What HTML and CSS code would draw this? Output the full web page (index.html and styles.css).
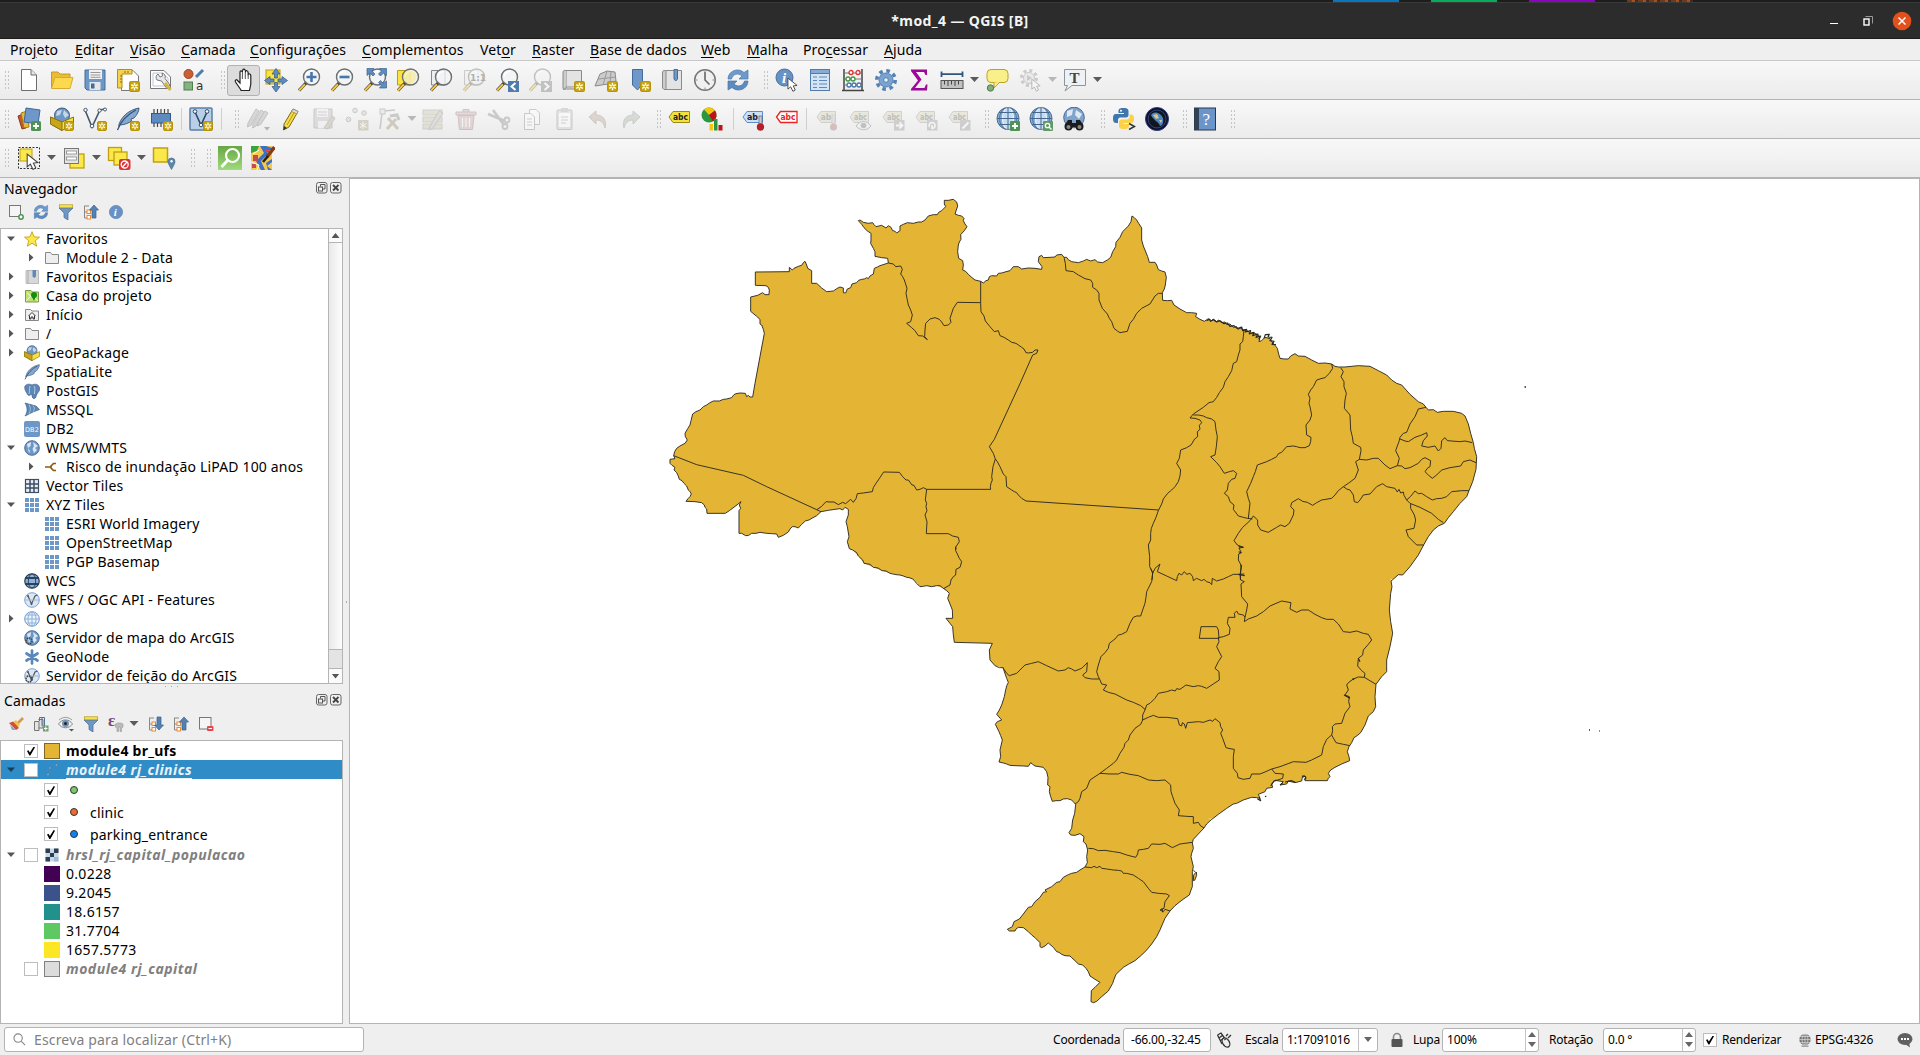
FILE: index.html
```html
<!DOCTYPE html>
<html lang="pt-BR">
<head>
<meta charset="utf-8">
<title>*mod_4 — QGIS [B]</title>
<link rel="stylesheet" href="styles.css">
</head>
<body>
<svg class="defs" width="0" height="0">
<defs>
<linearGradient id="gBlue" x1="0" y1="0" x2="0" y2="1"><stop offset="0" stop-color="#7fa6d3"/><stop offset="1" stop-color="#4a77ad"/></linearGradient>
<linearGradient id="gGreen" x1="0" y1="0" x2="0" y2="1"><stop offset="0" stop-color="#68a545"/><stop offset="1" stop-color="#9fdb7c"/></linearGradient>
<symbol id="new" viewBox="0 0 10 10"><rect x=".5" y=".5" width="9" height="9" rx="1.5" fill="#c8a50c" stroke="#b5940a"/><path d="M5 1.6V8.400M2 3.300L8 6.700M8 3.300L2 6.700" stroke="#fff" stroke-width="1.300"/><circle cx="5" cy="5" r="1" fill="#c8a50c"/></symbol>
<symbol id="lens" viewBox="0 0 24 24"><path d="M2 22.500L10 14" stroke="#333" stroke-width="3.200"/><path d="M2 22.500L8 16.200" stroke="#f3c63f" stroke-width="2"/><circle cx="14.500" cy="9" r="8" fill="#f2f4f5" fill-opacity=".75" stroke="#6b6f70" stroke-width="1.400"/><path d="M9 9a5.500 5.500 0 0 1 6-5.500" stroke="#fff" stroke-width="1.500" fill="none"/></symbol>
<symbol id="page" viewBox="0 0 24 24"><path d="M4.500 1.500H14L19.500 7V22.500H4.500Z" fill="#fff" stroke="#6e6e6e"/><path d="M14 1.500V7H19.500" fill="#e4e4e4" stroke="#6e6e6e"/></symbol>
<symbol id="open" viewBox="0 0 24 24"><path d="M1.500 20V4H8L10 6H20V10" fill="#e9bd35" stroke="#c7982a"/><path d="M1.500 20.500L5 9.500H23L20 20.500Z" fill="#fcd94f" stroke="#d8ab33"/></symbol>
<symbol id="save" viewBox="0 0 24 24"><path d="M2 2H22V22H4L2 20Z" fill="#6d97c7" stroke="#446c99"/><rect x="6" y="2" width="13" height="9" fill="#f1f1f1"/><path d="M7.500 4.500H17.500M7.500 7H17.500M7.500 9.300H17.500" stroke="#999"/><rect x="6.500" y="14" width="11" height="8" fill="#e4e6e8"/><rect x="8" y="15.500" width="3.500" height="5" fill="#446c99"/></symbol>
<symbol id="layoutnew" viewBox="0 0 24 24"><path d="M5.500 2.500H17L22.500 8V22.500H5.500Z" fill="#fff" stroke="#777"/><path d="M1.500 1.500H16V6H6V20H1.500Z" fill="#f2d24f" stroke="#b58e14"/><path d="M4 8H6M4 11H6M4 14H6M9 3V5M12 3V5" stroke="#8c6c0d"/><use href="#new" x="13" y="13" width="11" height="11"/></symbol>
<symbol id="layouts" viewBox="0 0 24 24"><path d="M1.500 2.500H15L21.500 9V20.500H1.500Z" fill="#fff" stroke="#777"/><path d="M4 5H13L19 10V18H4Z" fill="none" stroke="#b7c6d9"/><path d="M8 12A4 4 0 0 1 9 6L11 9L13.500 8L13 5A4 4 0 0 1 16 10.500L21 17L17.500 20L12.500 13Z" fill="#e8e8e8" stroke="#777"/><path d="M16 15L21.500 22" stroke="#d8b53b" stroke-width="3"/></symbol>
<symbol id="style" viewBox="0 0 24 24"><circle cx="6.500" cy="6" r="4.500" fill="#c85f36" stroke="#a2401b"/><path d="M14 9L21 2" stroke="#4f7cae" stroke-width="3"/><rect x="2" y="14" width="8.500" height="8" fill="#86b283" stroke="#4f8150"/><text x="14" y="22" font-size="12" font-family="DejaVu Sans" fill="#333">a</text></symbol>
<symbol id="hand" viewBox="0 0 24 24"><path d="M9 22L3.500 14C2.500 12 4.500 11 5.500 12.500L8 15V4C8 2.500 10 2.500 10.200 4L10.700 2.200C11 .8 13 .8 13.200 2.500L13.500 3.500C14 2.300 16 2.500 16 4.200L16.300 6.500C17 5.400 18.800 5.800 18.800 7.500V16L17.500 22.500H9Z" fill="#fff" stroke="#222" stroke-width="1.200"/><path d="M10.400 4V11M13.300 4V11M16.200 6V11" stroke="#555"/></symbol>
<symbol id="pan" viewBox="0 0 24 24"><rect x="2" y="2" width="14" height="14" fill="#fae23f" stroke="#bd9c10"/><g fill="#5d8cc0" stroke="#3b6391" stroke-width=".8"><path d="M12 .5L16 6H13.500V10H10.500V6H8Z"/><path d="M12 24L16 18.500H13.500V14.500H10.500V18.500H8Z"/><path d="M.5 12.500L6 8.500V11H10V14H6V16.500Z"/><path d="M23.500 12.500L18 8.500V11H14V14H18V16.500Z"/></g></symbol>
<symbol id="zin" viewBox="0 0 24 24"><use href="#lens" width="24" height="24"/><path d="M14.500 4V14M9.500 9H19.500" stroke="#4777aa" stroke-width="2.600"/></symbol>
<symbol id="zout" viewBox="0 0 24 24"><use href="#lens" width="24" height="24"/><path d="M9.500 9H19.500" stroke="#4777aa" stroke-width="2.600"/></symbol>
<symbol id="zfull" viewBox="0 0 24 24"><use href="#lens" width="24" height="24"/><g fill="#5f8dc1" stroke="#3b6391" stroke-width=".7"><path d="M4 .5H11L9 3L12 6L10 8L7 5L4 7.500Z"/><path d="M23.500 .5H16.500L18.500 3L15.500 6L17.500 8L20.500 5L23.500 7.500Z"/><path d="M23.500 20H16.500L18.500 17.500L15.500 14.500L17.500 12.500L20.500 15.500L23.500 13Z"/></g></symbol>
<symbol id="zsel" viewBox="0 0 24 24"><path d="M1.500 2.500H14V17H1.500Z" fill="#fbe33d" stroke="#bd9c10"/><use href="#lens" width="24" height="24"/><circle cx="14" cy="9" r="6.500" fill="#f5e98a" opacity=".6"/></symbol>
<symbol id="zlay" viewBox="0 0 24 24"><path d="M2.500 2.500H16V17H2.500Z" fill="#eee" stroke="#888"/><use href="#lens" width="24" height="24"/></symbol>
<symbol id="znat" viewBox="0 0 24 24"><use href="#zlay" width="24" height="24"/><text x="8" y="12.500" font-size="9" font-weight="bold" font-family="DejaVu Sans" fill="#444">1:1</text></symbol>
<symbol id="zlast" viewBox="0 0 24 24"><use href="#lens" width="24" height="24"/><rect x="13" y="13" width="11" height="11" fill="#4f7cad"/><path d="M20.500 15L16.500 18.500L20.500 22" fill="none" stroke="#fff" stroke-width="2"/></symbol>
<symbol id="znext" viewBox="0 0 24 24"><use href="#lens" width="24" height="24"/><rect x="13" y="13" width="11" height="11" fill="#777"/><path d="M16.500 15L20.500 18.500L16.500 22" fill="none" stroke="#fff" stroke-width="2"/></symbol>
<symbol id="view" viewBox="0 0 24 24"><path d="M5 2.500H20.500V19H5Z" fill="#e3e3e3" stroke="#8a8a8a"/><path d="M5 2.500C2.500 2 2 3 2 5V20C2 22 5 22 5 19" fill="#ccc" stroke="#8a8a8a"/><path d="M2 21H18V19" fill="#ddd" stroke="#8a8a8a"/><use href="#new" x="13" y="13" width="11" height="11"/></symbol>
<symbol id="view3d" viewBox="0 0 24 24"><path d="M6 6L13 3L21 4L22 13L14 16L1 18Z" fill="#ccc" stroke="#8a8a8a"/><path d="M4 11L22 9M13 3L9 17M17 4L16 16" stroke="#999" fill="none"/><use href="#new" x="13" y="13" width="11" height="11"/></symbol>
<symbol id="bmnew" viewBox="0 0 24 24"><path d="M5.500 1.500H15.500V16L10.500 22L5.500 17Z" fill="#6e98c9" stroke="#446b99"/><use href="#new" x="13" y="13" width="11" height="11"/></symbol>
<symbol id="bm" viewBox="0 0 24 24"><path d="M5.500 2.500H21.500V21.500H5.500Z" fill="#e3e3e3" stroke="#8a8a8a"/><path d="M5.500 2.500H3.500L2.500 4V20L4 21.500H6V3" fill="#ccc" stroke="#8a8a8a"/><path d="M14 1.500H17.500V11L15.700 13L14 11Z" fill="#6e98c9" stroke="#446b99"/></symbol>
<symbol id="clock" viewBox="0 0 24 24"><circle cx="12" cy="12" r="10.300" fill="#f0f0f0" stroke="#777" stroke-width="1.500"/><path d="M12 4V12L16.500 16.500" fill="none" stroke="#666" stroke-width="1.600"/><path d="M12 2.500V4.500M12 19.500V21.500M2.500 12H4.500M19.500 12H21.500" stroke="#888"/></symbol>
<symbol id="refresh" viewBox="0 0 24 24"><path d="M2 11C2 3 12 -1 18 4.500L22 2V11H13L16 8C12 4.500 7 6 5.500 11Z" fill="#6e9acb" stroke="#4a77aa" stroke-width=".7"/><path d="M22 13C22 21 12 25 6 19.500L2 22V13H11L8 16C12 19.500 17 18 18.500 13Z" fill="#5d8bbf" stroke="#4a77aa" stroke-width=".7"/></symbol>
<symbol id="cursor" viewBox="0 0 12 16"><path d="M1 1V13L4 10.500L6.500 15.500L9 14L6.800 9.500L11 9Z" fill="#fff" stroke="#444"/></symbol>
<symbol id="info" viewBox="0 0 24 24"><circle cx="9.500" cy="9.500" r="8.500" fill="#6792c6" stroke="#486f9e"/><text x="7" y="15" font-size="15" font-style="italic" font-weight="bold" font-family="Liberation Serif" fill="#fff">i</text><use href="#cursor" x="12" y="9" width="11" height="15"/></symbol>
<symbol id="table" viewBox="0 0 24 24"><rect x="2.500" y="1.500" width="19" height="21" fill="#d5e4f4" stroke="#4f7cad"/><rect x="2.500" y="1.500" width="19" height="4" fill="#86acd6" stroke="#4f7cad"/><path d="M5 9H9M5 12.500H9M5 16H9M5 19.500H9M11 9H19M11 12.500H19M11 16H19M11 19.500H19" stroke="#5d89ba" stroke-width="1.200"/></symbol>
<symbol id="abacus" viewBox="0 0 24 24"><path d="M3 1V23M21 1V23M1 22.500H23" stroke="#444" stroke-width="1.500"/><path d="M3 5H21M3 11H21M3 17H21" stroke="#777"/><g stroke-width="1.300" fill="#fff"><circle cx="10" cy="4.500" r="2" stroke="#d33"/><circle cx="17" cy="4.500" r="2" stroke="#d33"/><circle cx="7" cy="11" r="2" stroke="#3a9a3a"/><circle cx="12" cy="11" r="2" stroke="#3a9a3a"/><circle cx="8" cy="17" r="2" stroke="#47a"/><circle cx="13" cy="17" r="2" stroke="#47a"/><circle cx="18" cy="17" r="2" stroke="#47a"/></g></symbol>
<symbol id="gear" viewBox="0 0 24 24"><circle cx="12" cy="12" r="9.200" fill="none" stroke="#5582b5" stroke-width="3.600" stroke-dasharray="3.600 3.625"/><circle cx="12" cy="12" r="7" fill="#7aa3d2" stroke="#5582b5"/><circle cx="12" cy="12" r="2.300" fill="#e9eff6" stroke="#5582b5"/></symbol>
<symbol id="sigma" viewBox="0 0 24 24"><path d="M4 1.500H20V7H18.500L17 4H9L14.500 11.500L8 20H17.500L19 16.500H20.500L20 22.500H4V21L11 12.500L4 3Z" fill="#a0069a"/></symbol>
<symbol id="ruler" viewBox="0 0 24 24"><path d="M1.500 3.500V9M22.500 3.500V9M1.500 6.200H22.500" stroke="#31547c" stroke-width="1.800"/><rect x="1" y="12.500" width="22" height="8" fill="#c2c2c2" stroke="#555"/><path d="M4.500 13V16.500M8 13V18M11.500 13V16.500M15 13V18M18.500 13V16.500" stroke="#444"/></symbol>
<symbol id="tips" viewBox="0 0 24 24"><rect x="2" y="1.500" width="21" height="13" rx="4" fill="#faf08a" stroke="#c0a020"/><path d="M9 14.500V20L15 14" fill="#faf08a" stroke="#c0a020"/><circle cx="5.500" cy="20" r="3.200" fill="#7fae7b" stroke="#4c804c"/></symbol>
<symbol id="action" viewBox="0 0 24 24"><circle cx="11" cy="10" r="7.500" fill="none" stroke="#888" stroke-width="3" stroke-dasharray="3 2.900"/><circle cx="11" cy="10" r="5.500" fill="#ddd" stroke="#888"/><path d="M9 7V13L14 10Z" fill="#888"/><use href="#cursor" x="13" y="10" width="10" height="14"/></symbol>
<symbol id="textann" viewBox="0 0 24 24"><path d="M1.500 1.500H22.500V17.500H9L2 23L4.500 17.500H1.500Z" fill="#eef2f5" stroke="#8a959d"/><text x="6.500" y="15" font-size="15" font-weight="bold" font-family="Liberation Serif" fill="#444">T</text></symbol>

<symbol id="dsm" viewBox="0 0 24 24"><path d="M1 9L6 7L9 21L5 22Z" fill="#c8562d" stroke="#8f3815"/><path d="M4 6L10 4L12 20L7 21Z" fill="#e8b93a" stroke="#a37c14"/><path d="M9 1L23 3L21 17L7 15Z" fill="#6e98c9" stroke="#3f6795"/><rect x="14" y="14" width="10" height="10" rx="1.500" fill="#4f9256"/><path d="M19 16V22M16 19H22" stroke="#fff" stroke-width="1.800"/></symbol>
<symbol id="gpkg" viewBox="0 0 24 24"><circle cx="12" cy="8.500" r="7.500" fill="#6e96c4" stroke="#38597f"/><path d="M7 4L12 3L10 8L6 9ZM14 3L19 8L15 11L13 7Z" fill="#c5d6e8"/><path d="M.5 10L12 15L23.500 10V17L12 23.500L.5 17Z" fill="#f6df45" stroke="#8a7210"/><path d="M.5 10L12 15V23.500L.5 17Z" fill="#c9a51a" stroke="#8a7210"/></symbol>
<symbol id="gpkgnew" viewBox="0 0 24 24"><use href="#gpkg" width="24" height="24"/><use href="#new" x="14" y="14" width="10" height="10"/></symbol>
<symbol id="shp" viewBox="0 0 24 24"><path d="M2 3L9 20L17 3L22 2" fill="none" stroke="#45586b" stroke-width="1.600"/><g fill="#fff" stroke="#45586b"><circle cx="2.500" cy="3" r="1.700"/><circle cx="9" cy="19" r="1.800"/><circle cx="16.500" cy="3.500" r="1.700"/><circle cx="22" cy="2.500" r="1.500"/></g><use href="#new" x="14" y="14" width="10" height="10"/></symbol>
<symbol id="feather" viewBox="0 0 24 24"><path d="M2.500 19.500C4 11 12 3 23 1C23 4 21 8 18 11L15 12L15.500 14C13 16 9 17.500 4.500 18" fill="#86a8cf" stroke="#3a5d85"/><path d="M1.500 23C5 14 12 7 20 3" fill="none" stroke="#2f5077" stroke-width="1.300"/></symbol>
<symbol id="splnew" viewBox="0 0 24 24"><use href="#feather" width="24" height="24"/><use href="#new" x="14" y="14" width="10" height="10"/></symbol>
<symbol id="mem" viewBox="0 0 24 24"><path d="M5 2V20M8.500 2V20M12 2V20M15.500 2V20M19 2V20" stroke="#444" stroke-width="1.200"/><rect x="2.500" y="6.500" width="19" height="9.500" fill="#5d8bc0" stroke="#345a86"/><use href="#new" x="14" y="14" width="10" height="10"/></symbol>
<symbol id="virt" viewBox="0 0 24 24"><rect x="1" y="1" width="22" height="22" rx="1" fill="#b9cfe8" stroke="#5b7fa8" stroke-width="1.500"/><path d="M6 5L12 18L18 5" fill="none" stroke="#2d4863" stroke-width="1.600"/><g fill="#fff" stroke="#2d4863"><circle cx="6" cy="4.500" r="1.800"/><circle cx="12" cy="18" r="1.800"/><circle cx="18" cy="4.500" r="1.800"/></g><use href="#new" x="14" y="14" width="10" height="10"/></symbol>
<symbol id="pencils" viewBox="0 0 24 24"><g fill="#aaa" stroke="#777"><path d="M2 16L10 2L13 4L5 18L1.500 20Z"/><path d="M7 17L15 3L18 5L10 19L6.500 21Z"/><path d="M12 15L19 4L22 6L15 17L11.500 19Z"/></g><path d="M18 20H24L21 23.500Z" fill="#555"/></symbol>
<symbol id="pencil" viewBox="0 0 24 24"><path d="M5 17L14 2L19 4.500L10 20L4.500 23Z" fill="#f5dc45" stroke="#7b6a19"/><path d="M14 2L19 4.500L18 7L12.500 4.500Z" fill="#ddd" stroke="#888" stroke-width=".7"/><path d="M4.500 23L5 19L8 21Z" fill="#333"/><path d="M8 18L15.500 5" stroke="#b8991f"/></symbol>
<symbol id="saveed" viewBox="0 0 24 24"><path d="M2 2H20V21H2Z" fill="#bbb" stroke="#888"/><rect x="5" y="2" width="11" height="8" fill="#eee"/><path d="M6 5H15M6 8H15" stroke="#999"/><rect x="6" y="14" width="9" height="7" fill="#eee"/><path d="M12 21L20 9L23 11L16 22Z" fill="#b5a98c" stroke="#888"/></symbol>
<symbol id="addpt" viewBox="0 0 24 24"><g fill="#ccc" stroke="#888"><circle cx="10" cy="3.500" r="2.300"/><circle cx="19" cy="6" r="2.300"/><circle cx="3.500" cy="12.500" r="2.300"/></g><rect x="13" y="13" width="10.500" height="10.500" rx="1" fill="#a89f80"/><path d="M18 14.500V22M15 16.500L21.500 20.500M21.500 16.500L15 20.500" stroke="#fff"/></symbol>
<symbol id="vertex" viewBox="0 0 24 24"><path d="M4 6L2 22M6 4L17 3" stroke="#888" stroke-width="1.500"/><rect x="2" y="2" width="5" height="5" fill="#ddd" stroke="#888"/><path d="M9 22L18 12M10 11L20 22" stroke="#9a8f70" stroke-width="3"/><path d="M12 9L19 8L21 13" stroke="#888" stroke-width="3" fill="none"/></symbol>
<symbol id="attr" viewBox="0 0 24 24"><g fill="#c9c6a0" stroke="#999"><rect x="2" y="3" width="19" height="5"/><rect x="2" y="10" width="19" height="5"/><rect x="2" y="17" width="19" height="5"/></g><path d="M8 21L18 4L22 6L12 21L8 23Z" fill="#bbb" stroke="#888"/></symbol>
<symbol id="trash" viewBox="0 0 24 24"><path d="M4 8.500H20L18.500 22.500H5.500Z" fill="#c8a8a8" stroke="#997878"/><path d="M2 5H22V8H2ZM9 5V2.500H15V5" fill="#ccb0b0" stroke="#997878"/><path d="M8.500 11V20M12 11V20M15.500 11V20" stroke="#fff"/></symbol>
<symbol id="cut" viewBox="0 0 24 24"><path d="M1 7L18 14M6 3L17 18" stroke="#888" stroke-width="2.600"/><circle cx="20" cy="13" r="2.500" fill="none" stroke="#888" stroke-width="1.800"/><circle cx="18" cy="19.500" r="2.500" fill="none" stroke="#888" stroke-width="1.800"/></symbol>
<symbol id="copy" viewBox="0 0 24 24"><path d="M9.500 2.500H16L19.500 6V17.500H9.500Z" fill="#fff" stroke="#888"/><path d="M4.500 6.500H11L14.500 10V22.500H4.500Z" fill="#fff" stroke="#888"/><path d="M7 12H12M7 15H12M7 18H12" stroke="#999"/></symbol>
<symbol id="paste" viewBox="0 0 24 24"><rect x="4" y="3" width="15" height="19.500" rx="1" fill="#ccc" stroke="#888"/><rect x="6" y="6" width="11" height="14" fill="#fff"/><rect x="8" y="1" width="7" height="4" fill="#aaa"/><path d="M8 10H15M8 13H15M8 16H13" stroke="#999"/></symbol>
<symbol id="undo" viewBox="0 0 24 24"><path d="M3 10L10 4V8C17 8 21 13 19 21C18 16 15 13 10 13V17Z" fill="#b9a695" stroke="#99887a"/></symbol>
<symbol id="redo" viewBox="0 0 24 24"><path d="M21 10L14 4V8C7 8 3 13 5 21C6 16 9 13 14 13V17Z" fill="#aab2a5" stroke="#8a9286"/></symbol>
<symbol id="lab" viewBox="0 0 24 24"><path d="M2 10L6 4.500H22.500V15.500H6Z" fill="#f2e03c" stroke="#9d8a12"/><text x="6" y="13.300" font-size="8.500" font-weight="bold" font-family="DejaVu Sans" textLength="15" lengthAdjust="spacingAndGlyphs" fill="#222">abc</text></symbol>
<symbol id="diag" viewBox="0 0 24 24"><circle cx="9" cy="8" r="7.500" fill="#2a9740"/><path d="M9 8L4 2.500A7.500 7.500 0 0 1 15 3.500Z" fill="#f6c50e"/><path d="M9 8L15 3.500A7.500 7.500 0 0 1 13 14.500Z" fill="#c01414"/><rect x="9.500" y="17" width="3.500" height="6.500" fill="#f6c50e"/><rect x="14" y="12" width="3.500" height="11.500" fill="#2a9740"/><rect x="18.500" y="18" width="4" height="5.500" fill="#c01414"/></symbol>
<symbol id="labpin" viewBox="0 0 24 24"><path d="M1 10L5 4.500H20.500V15.500H5Z" fill="#cfe0f5" stroke="#5b8bd0"/><text x="5" y="13.300" font-size="9" font-weight="bold" font-family="DejaVu Sans" textLength="11" lengthAdjust="spacingAndGlyphs" fill="#222">ab</text><rect x="17" y="9" width="3" height="8" fill="#ccc" stroke="#555" stroke-width=".6"/><circle cx="18.500" cy="20" r="3.700" fill="#b3202a"/></symbol>
<symbol id="labred" viewBox="0 0 24 24"><path d="M1.500 10L5.500 4.500H22V15.500H5.500Z" fill="#fff" stroke="#e22" stroke-width="1.300"/><text x="5.500" y="13.400" font-size="8.500" font-weight="bold" font-family="DejaVu Sans" textLength="15" lengthAdjust="spacingAndGlyphs" fill="#e22">abc</text></symbol>
<symbol id="labg" viewBox="0 0 24 24"><path d="M2 10L6 4.500H20.500V15.500H6Z" fill="#d8d6b8" stroke="#999"/><text x="6" y="13.300" font-size="8.500" font-weight="bold" font-family="DejaVu Sans" textLength="13" lengthAdjust="spacingAndGlyphs" fill="#666">abc</text></symbol>
<symbol id="lg1" viewBox="0 0 24 24"><path d="M2 10L6 4.500H20.500V15.500H6Z" fill="#d8d6b8" stroke="#999"/><text x="5.500" y="13.300" font-size="9" font-weight="bold" font-family="DejaVu Sans" textLength="11" lengthAdjust="spacingAndGlyphs" fill="#666">ab</text><rect x="17" y="8" width="3" height="9" fill="#ccc" stroke="#888" stroke-width=".6"/><circle cx="18.500" cy="20" r="3.500" fill="#b07070"/></symbol>
<symbol id="lg2" viewBox="0 0 24 24"><use href="#labg" width="24" height="24"/><path d="M8 19C12 13 19 13 23 19C19 24 12 24 8 19Z" fill="#eee" stroke="#777"/><circle cx="15.500" cy="18.500" r="2.800" fill="#777"/></symbol>
<symbol id="lg3" viewBox="0 0 24 24"><use href="#labg" width="24" height="24"/><rect x="13" y="13" width="10.500" height="10.500" fill="#999"/><path d="M15 18.500H21M18.500 15.500L21.500 18.500L18.500 21.500" stroke="#fff" stroke-width="1.800" fill="none"/></symbol>
<symbol id="lg4" viewBox="0 0 24 24"><use href="#labg" width="24" height="24"/><rect x="13" y="13" width="10.500" height="10.500" fill="#999"/><path d="M15.500 20A3 3 0 1 1 18 21.500V18" stroke="#fff" stroke-width="1.600" fill="none"/></symbol>
<symbol id="lg5" viewBox="0 0 24 24"><use href="#labg" width="24" height="24"/><rect x="13" y="13" width="10.500" height="10.500" fill="#999"/><path d="M15.500 21.500L21.500 15.500" stroke="#fff" stroke-width="2"/></symbol>
<symbol id="wglobe" viewBox="0 0 24 24"><circle cx="12" cy="11.500" r="11" fill="#86acd8" stroke="#4a6d96"/><ellipse cx="12" cy="11.500" rx="5.500" ry="11" fill="#c9dcf1" stroke="#fff"/><path d="M12 .5V22.500M1 11.500H23M3 5.500H21M3 17.500H21" stroke="#45688f"/><ellipse cx="12" cy="11.500" rx="8.500" ry="11" fill="none" stroke="#45688f" stroke-width=".8"/></symbol>
<symbol id="wadd" viewBox="0 0 24 24"><use href="#wglobe" width="24" height="24"/><rect x="14" y="14" width="10" height="10" rx="1" fill="#4f9256"/><path d="M19 16V22M16 19H22" stroke="#fff" stroke-width="1.800"/></symbol>
<symbol id="wfind" viewBox="0 0 24 24"><use href="#wglobe" width="24" height="24"/><rect x="14" y="14" width="10" height="10" rx="1" fill="#5f9a66"/><circle cx="18.500" cy="18.500" r="2.200" fill="none" stroke="#fff" stroke-width="1.300"/><path d="M20 20L22.500 22.500" stroke="#fff" stroke-width="1.400"/></symbol>
<symbol id="csw" viewBox="0 0 24 24"><circle cx="12" cy="10.500" r="10.300" fill="#7fa3cb" stroke="#4a6a90"/><path d="M5 4L11 2L10 8L5 10ZM14 3L20 7L17 12L13 8Z" fill="#dfe9f4"/><path d="M6 13H10V16H14V13H18L21 18V20H3V18Z" fill="#1c1c1c"/><circle cx="6.500" cy="19.500" r="4" fill="#1c1c1c"/><circle cx="17.500" cy="19.500" r="4" fill="#1c1c1c"/><circle cx="6.500" cy="20" r="2" fill="#888"/><circle cx="17.500" cy="20" r="2" fill="#888"/></symbol>
<symbol id="python" viewBox="0 0 24 24"><path d="M11 1C6 1 6.500 3.200 6.500 6H12V7H4C1.500 7 1 9 1 11.500C1 14.500 2 16 4 16H6V13C6 11 7.500 10.500 9 10.500H14C15.500 10.500 16.500 9.500 16.500 8V4C16.500 1.500 14 1 11 1Z" fill="#3f76ab"/><path d="M12.500 22C17 22 17 20 17 17H11.500V16H19C21.500 16 22 14 22 11.500C22 9 21 7.500 19 7.500H17.500V10C17.500 11.500 16 12.500 14.500 12.500H9.500C8 12.500 7 13.500 7 15V19C7 21.500 9.500 22 12.500 22Z" fill="#fbd147"/><circle cx="9" cy="3.700" r="1" fill="#fff"/><path d="M17 16.500L22.500 19.500L17 22.500" fill="none" stroke="#333" stroke-width="1.500"/></symbol>
<symbol id="earth" viewBox="0 0 24 24"><circle cx="12" cy="12" r="11.500" fill="#0b0d2c" stroke="#2c3e77"/><circle cx="12" cy="12" r="9" fill="#12161f" stroke="#4a6ab0" stroke-width=".6"/><path d="M6 8C9 3 16 6 18 11C19 16 17 19 15 19C14 15 8 13 6 8Z" fill="#4c86c2"/><path d="M8 8L12 7L14 11L11 12ZM14 13L17 13L16 16Z" fill="#dcc88a"/></symbol>
<symbol id="help" viewBox="0 0 24 24"><rect x="1.500" y="1" width="21" height="22" fill="#6b95c8" stroke="#27384b"/><rect x="1.500" y="1" width="4.500" height="22" fill="#2f4258"/><text x="9.500" y="18" font-size="17" font-family="Liberation Serif" fill="#fff">?</text></symbol>

<symbol id="selrect" viewBox="0 0 24 24"><rect x="1.500" y="1.500" width="21" height="21" fill="none" stroke="#333" stroke-dasharray="2 1.500"/><rect x="3" y="3" width="12" height="12" fill="#fbe84a" stroke="#c0a010"/><use href="#cursor" x="9" y="7" width="13" height="17"/></symbol>
<symbol id="selval" viewBox="0 0 24 24"><rect x="8" y="8" width="14" height="14" fill="#fbe84a" stroke="#c0a010" stroke-width="1.300"/><rect x="2.500" y="2.500" width="14" height="15" fill="#e4e4e4" stroke="#777"/><rect x="4.500" y="5" width="10" height="3" fill="#fff" stroke="#888" stroke-width=".8"/><rect x="4.500" y="11" width="10" height="3" fill="#fff" stroke="#888" stroke-width=".8"/></symbol>
<symbol id="desel" viewBox="0 0 24 24"><rect x="1.500" y="1.500" width="13" height="13" fill="#fbe84a" stroke="#c0a010" stroke-width="1.300"/><rect x="7" y="6" width="13" height="13" fill="#fbe84a" stroke="#c0a010" stroke-width="1.300"/><rect x="12" y="13" width="11.500" height="11" rx="2" fill="#d9363a"/><circle cx="17.700" cy="18.500" r="3.500" fill="none" stroke="#fff" stroke-width="1.300"/><path d="M15.500 21L20 16" stroke="#fff" stroke-width="1.300"/></symbol>
<symbol id="selloc" viewBox="0 0 24 24"><rect x="1.500" y="2" width="14" height="14" fill="#fbe84a" stroke="#c0a010" stroke-width="1.500"/><path d="M19.500 23.500C17 19 16 17.500 16 15.500A3.500 3.500 0 0 1 23 15.500C23 17.500 22 19 19.500 23.500Z" fill="#5c87a8" stroke="#3f6988" stroke-width=".6"/><circle cx="19.500" cy="15.300" r="1.200" fill="#fff"/></symbol>
<symbol id="gsearch" viewBox="0 0 24 24"><rect width="24" height="24" fill="url(#gGreen)"/><circle cx="14.500" cy="9.500" r="6.500" fill="none" stroke="#fff" stroke-width="2.200"/><path d="M10 14L3.500 21" stroke="#fff" stroke-width="3"/></symbol>
<symbol id="osm" viewBox="0 0 24 24"><rect width="21" height="24" fill="#f5c94b"/><path d="M0 0H8L6 5L0 7Z" fill="#37a63c"/><path d="M9 0L13 7L5 15L10 24H14L10 15L17 8L16 3L21 5V2L15 0Z" fill="#3d6fc4"/><path d="M2 9H7V15H2ZM14 3H18V6H14ZM1 18H5V22H1Z" fill="#c64a55"/><path d="M15 17L21 13V16L16 20L21 24H17Z" fill="#3d6fc4"/><path d="M0 16L8 19L6 24M8 4L2 8" stroke="#fff" fill="none"/><path d="M23.500 1L16 11" stroke="#8b3a10" stroke-width="3.600"/><path d="M17 10L12 16" stroke="#222" stroke-width="2.600"/></symbol>

<symbol id="t-add" viewBox="0 0 16 16"><rect x="1.500" y="1.500" width="11" height="11" fill="#f5f5f5" stroke="#777"/><circle cx="13" cy="13" r="2.200" fill="#fff" stroke="#4f9256" stroke-width="1.500"/></symbol>
<symbol id="t-funnel" viewBox="0 0 16 16"><path d="M1 4H15L10 9V16L6 13.500V9Z" fill="#6d97c7" stroke="#456c99" stroke-width=".7"/><rect x="1.300" y=".8" width="13.400" height="3" fill="#f7e34b" stroke="#b59a1b" stroke-width=".7"/></symbol>
<symbol id="t-collapse" viewBox="0 0 16 16"><path d="M1 2H6M1.500 2V14H6M1.500 8H5" stroke="#888" fill="none"/><rect x="4" y="6" width="3.500" height="3.500" fill="#fff" stroke="#ee8a2a"/><rect x="4" y="11.500" width="3.500" height="3.500" fill="#fff" stroke="#ee8a2a"/><path d="M11 1L15.500 6H13V14H9V6H6.500Z" fill="#5582b5" stroke="#38608d" stroke-width=".7"/></symbol>
<symbol id="t-expand" viewBox="0 0 16 16"><path d="M1 2H6M1.500 2V14H6M1.500 8H5" stroke="#888" fill="none"/><rect x="4" y="6" width="3.500" height="3.500" fill="#fff" stroke="#ee8a2a"/><rect x="4" y="11.500" width="3.500" height="3.500" fill="#fff" stroke="#ee8a2a"/><path d="M11 14L15.500 9H13V1H9V9H6.500Z" fill="#5582b5" stroke="#38608d" stroke-width=".7"/></symbol>
<symbol id="t-info" viewBox="0 0 16 16"><circle cx="8" cy="8" r="6.600" fill="#6792c6" stroke="#7d98b8"/><text x="5.800" y="12" font-size="11" font-style="italic" font-weight="bold" font-family="Liberation Serif" fill="#fff">i</text></symbol>
<symbol id="t-brush" viewBox="0 0 16 16"><path d="M15 2L9 8" stroke="#d39a4a" stroke-width="2.600"/><path d="M5 6L8 4L12 9L9 12Z" fill="#f3c347"/><path d="M1 7L5 5.500L11 12L8 14Z" fill="#cf4f3a"/><path d="M2 9L8 14H4Z" fill="#7da7d8"/></symbol>
<symbol id="t-group" viewBox="0 0 16 16"><path d="M1.500 5.500H6V14.500H1.500ZM5.500 3.500H10V12H5.500" fill="#e4e4e4" stroke="#777"/><path d="M6.500 5V1.500H11.500V12M9 1V10" fill="none" stroke="#4f7395"/><rect x="10" y="9.500" width="5.500" height="6" fill="#6ba06f"/><path d="M12.800 10.500V14.500M11 12.500H14.500" stroke="#fff"/></symbol>
<symbol id="t-eye" viewBox="0 0 16 16"><path d="M.5 8C4 2.500 11 2.500 14.500 8C11 13 4 13 .5 8Z" fill="#f2f2f2" stroke="#888"/><circle cx="7.500" cy="7.500" r="3.500" fill="#6d90b5"/><circle cx="7.500" cy="7.500" r="1.500" fill="#222"/><path d="M1 4C5 .5 10 .5 14 4" fill="none" stroke="#999"/><path d="M11 13H16L13.500 15.500Z" fill="#555"/></symbol>
<symbol id="t-eps" viewBox="0 0 16 16"><text x="0" y="9.500" font-size="17" font-weight="bold" font-family="Liberation Serif" fill="#7b4a7b">ε</text><path d="M7.500 8C9 6.500 13 6.500 15 8V11L13.500 12.500V15.500H12V11H10.500V15.500H9V12.500L7.500 11Z" fill="#bbb" stroke="#999" stroke-width=".6"/></symbol>
<symbol id="t-rem" viewBox="0 0 16 16"><rect x="1.500" y="1.500" width="11.500" height="11.500" fill="#f5f5f5" stroke="#777"/><rect x="9" y="10" width="6.500" height="5" rx="1" fill="#e5484d"/><path d="M10.500 12.500H14" stroke="#fff"/></symbol>
<symbol id="t-star" viewBox="0 0 16 16"><path d="M8 .7L10 5.800L15.500 6.200L11.300 9.700L12.700 15.200L8 12.200L3.300 15.200L4.700 9.700L.5 6.200L6 5.800Z" fill="#fbe84a" stroke="#c5a316" stroke-width=".9"/></symbol>
<symbol id="t-folder" viewBox="0 0 16 16"><path d="M1.500 13.500V2.500H6.500L8 4.500H14.500V13.500Z" fill="#eee" stroke="#888"/></symbol>
<symbol id="t-bm" viewBox="0 0 16 16"><path d="M2 1.500H14.500V14.500H2Z" fill="#d8d8d8" stroke="#bbb"/><path d="M4 1V14.500" stroke="#aaa"/><path d="M8.500 1H12V7.500L10.200 9L8.500 7.500Z" fill="#5d89bc"/></symbol>
<symbol id="t-home" viewBox="0 0 16 16"><path d="M1.500 14V2.500H7L8.500 4H14.500V14Z" fill="#bde26e" stroke="#7d9a4d"/><path d="M2 13L8 7L14 13M3 5L8 9" stroke="#f3f9dd" fill="none"/><circle cx="10" cy="7" r="3" fill="#158a15"/><path d="M8 9L10 13L11.500 9Z" fill="#158a15"/></symbol>
<symbol id="t-house" viewBox="0 0 16 16"><path d="M1.500 13.500V2.500H6.500L8 4H14.500V13.500Z" fill="#eee" stroke="#888"/><path d="M4.500 9L8 5.500L11.500 9M5.500 8.500V12H7V10H9V12H10.500V8.500" fill="#fff" stroke="#333"/></symbol>
<symbol id="t-pg" viewBox="0 0 16 16"><path d="M1 3C3 .5 6 1 8 2C11 .5 15 1 15.500 5C16 8 14 9 13 11C12 13 12 15.500 10 15.500C8 15.500 8 13 8 11C6 12 5 13 4 12C2 9 0 6 1 3Z" fill="#5b88b8" stroke="#3f6289" stroke-width=".7"/><path d="M6 3C5 6 6 9 5 11M10 3C12 6 10 8 10.500 11" fill="none" stroke="#c9d9ea" stroke-width=".8"/></symbol>
<symbol id="t-ms" viewBox="0 0 16 16"><path d="M1 1L12 4L15.500 7.500L9 10L1 14C4 10 3.500 5 1 1Z" fill="#5b88b8" stroke="#3f6289" stroke-width=".7"/><path d="M5 2.500C7 6 6.500 9 5 12M9 3.500C11 6 10.500 8 9 10" fill="none" stroke="#c9d9ea" stroke-width=".7"/></symbol>
<symbol id="t-db2" viewBox="0 0 16 16"><rect width="16" height="16" rx="2" fill="#6d97c7"/><text x="1" y="10.500" font-size="6.500" textLength="14" font-family="DejaVu Sans" fill="#fff">DB2</text></symbol>
<symbol id="t-globe" viewBox="0 0 16 16"><circle cx="8" cy="8" r="7.300" fill="#6f98c8" stroke="#4c6f98"/><path d="M3 4L7 2L6.500 6L4 8L6 11L5 13M9 2L14 6L11 8L13 10L10 13L8.500 9L10 6Z" fill="#dae6f2"/></symbol>
<symbol id="t-src" viewBox="0 0 16 16"><path d="M1 8H6.500M12 4.500H9.500L7 7V9L9.500 11.500H12" fill="none" stroke="#8a5a10" stroke-width="1.700"/></symbol>
<symbol id="t-vt" viewBox="0 0 16 16"><rect x="1.500" y="1.500" width="13" height="13" fill="#e8eef5" stroke="#3c4f64" stroke-width="1.200"/><path d="M6 1V15M10 1V15M1 6H15M1 10H15" stroke="#3c4f64" stroke-width="1.500"/></symbol>
<symbol id="t-xyz" viewBox="0 0 16 16"><path d="M1 3H15M1 8H15M1 13H15" stroke="#6d97c7" stroke-width="4" stroke-dasharray="4 1"/></symbol>
<symbol id="t-wcs" viewBox="0 0 16 16"><circle cx="8" cy="8" r="7.200" fill="#8fb2da" stroke="#2d435c" stroke-width="1.300"/><path d="M1 5H15M1 11H15" stroke="#2d435c" stroke-width="2.200"/><ellipse cx="8" cy="8" rx="3.700" ry="7" fill="none" stroke="#2d435c"/></symbol>
<symbol id="t-wfs" viewBox="0 0 16 16"><circle cx="8" cy="8" r="7.300" fill="#dbe7f5" stroke="#7da3cd"/><path d="M4 4L7.500 12L11 4L13.500 3" fill="none" stroke="#555" stroke-width="1.200"/><path d="M1 8H15" stroke="#9dbbdc"/><circle cx="4" cy="4" r="1" fill="#555"/><circle cx="7.500" cy="12" r="1" fill="#555"/></symbol>
<symbol id="t-ows" viewBox="0 0 16 16"><circle cx="8" cy="8" r="7.300" fill="#eaf2fb" stroke="#6f98c8"/><path d="M1 8H15M2.500 4H13.500M2.500 12H13.500M8 1V15" stroke="#8fb2da" fill="none"/><ellipse cx="8" cy="8" rx="4" ry="7" fill="none" stroke="#8fb2da"/></symbol>
<symbol id="t-arc" viewBox="0 0 16 16"><use href="#t-globe" width="16" height="16"/><circle cx="5" cy="11" r="3" fill="none" stroke="#444" stroke-width="1.500" stroke-dasharray="1.500 .8"/></symbol>
<symbol id="t-arcf" viewBox="0 0 16 16"><use href="#t-wfs" width="16" height="16"/><circle cx="5" cy="11" r="3" fill="none" stroke="#444" stroke-width="1.500" stroke-dasharray="1.500 .8"/></symbol>
<symbol id="t-node" viewBox="0 0 16 16"><path d="M8 1.500V14.500M2.500 4.500L13.500 11.500M13.500 4.500L2.500 11.500" stroke="#5b88b8" stroke-width="2.700" stroke-linecap="round"/></symbol>
<symbol id="t-rast" viewBox="0 0 16 16"><rect x="1.500" y="1.500" width="13" height="13" fill="#c7d8ea"/><path d="M1.500 1.500H6V6H1.500ZM10 1.500H14.500V6H10ZM6 6H10V10H6ZM1.500 10H6V14.500H1.500Z" fill="#2c3e50"/><path d="M10 10H14.500V14.500H10Z" fill="#9ebadb"/></symbol>
<symbol id="t-pts" viewBox="0 0 16 16"><g fill="#b9cbd8" stroke="#54707f" stroke-width=".6"><circle cx="4" cy="12.500" r="1"/><circle cx="6" cy="6" r="1"/><circle cx="12.500" cy="3" r="1"/></g></symbol>
<symbol id="d-float" viewBox="0 0 12 12"><rect x=".5" y=".5" width="10.500" height="10.500" rx="2" fill="none" stroke="#666"/><rect x="2.500" y="5" width="4" height="4" fill="none" stroke="#555"/><path d="M4.500 4.500V2.500H9V7H7" fill="none" stroke="#555"/></symbol>
<symbol id="d-close" viewBox="0 0 12 12"><rect x=".5" y=".5" width="10.500" height="10.500" rx="2" fill="none" stroke="#666"/><path d="M3 3L8.500 8.500M8.500 3L3 8.500" stroke="#444" stroke-width="1.800"/></symbol>
<symbol id="s-lens" viewBox="0 0 14 14"><circle cx="5.500" cy="5.500" r="4.500" fill="none" stroke="#888" stroke-width="1.200"/><path d="M9 9L13 13" stroke="#888" stroke-width="1.200"/></symbol>
<symbol id="s-mouse" viewBox="0 0 16 16"><path d="M1.500 3L5 1L10 8M1.500 3L6 12M3 6L7 3M4 9L8 6M10 4L12 2M12 6L15 3" fill="none" stroke="#333" stroke-width="1.300"/><ellipse cx="10" cy="10.500" rx="3.300" ry="5" transform="rotate(-30 10 10.500)" fill="#eee" stroke="#333" stroke-width="1.300"/><path d="M8 8L10.500 6.800" stroke="#333"/></symbol>
<symbol id="s-lock" viewBox="0 0 14 16"><path d="M3.500 8V5A3.500 3.500 0 0 1 10.500 5V8" fill="none" stroke="#888" stroke-width="1.600"/><rect x="1.500" y="7" width="11" height="8" rx="1" fill="#555"/></symbol>
<symbol id="s-globe" viewBox="0 0 16 16"><circle cx="8" cy="7.500" r="6.500" fill="#777"/><path d="M1 7.500H15M2 4H14M2 11H14M8 1V14" stroke="#ddd" stroke-width=".8"/><ellipse cx="8" cy="7.500" rx="3.300" ry="6.500" fill="none" stroke="#ddd" stroke-width=".8"/><path d="M4 15H12" stroke="#666"/></symbol>
<symbol id="s-msg" viewBox="0 0 16 16"><ellipse cx="8" cy="7" rx="7.500" ry="6" fill="#606060"/><path d="M8 12L13 15.500L12 10Z" fill="#606060"/><path d="M4 7H6M7 7H9M10 7H12" stroke="#fff" stroke-width="2"/></symbol>
</defs>
</svg>

<div class="desktop-strip"><i class="w1"></i><i class="w2"></i><i class="w3"></i><i class="w4"></i></div>
<header class="titlebar">
  <h1>*mod_4 — QGIS [B]</h1>
  <div class="winbtns"><i class="min"></i><svg class="rest" viewBox="0 0 10 10"><path d="M2.500 .5H9.500V7.500" fill="none" stroke="#999"/><rect x="1" y="3" width="5" height="6" fill="none" stroke="#fff" stroke-width="1.400"/></svg><svg class="cls" viewBox="0 0 20 20"><circle cx="10" cy="10" r="9.300" fill="#e2501c"/><path d="M6.500 6.500L13.500 13.500M13.500 6.500L6.500 13.500" stroke="#fff" stroke-width="1.500"/></svg></div>
</header>
<nav class="menubar"><span>Pro<u>j</u>eto</span><span><u>E</u>ditar</span><span><u>V</u>isão</span><span><u>C</u>amada</span><span><u>C</u>onfigurações</span><span><u>C</u>omplementos</span><span>Vet<u>o</u>r</span><span><u>R</u>aster</span><span><u>B</u>ase de dados</span><span><u>W</u>eb</span><span><u>M</u>alha</span><span>Pro<u>c</u>essar</span><span><u>A</u>juda</span></nav>

<div class="toolbar">
<b class="h0"></b>
<svg><use href="#page"/></svg><svg><use href="#open"/></svg><svg><use href="#save"/></svg><svg><use href="#layoutnew"/></svg><svg><use href="#layouts"/></svg><svg><use href="#style"/></svg>
<b></b>
<span class="pressed"><svg><use href="#hand"/></svg></span><svg><use href="#pan"/></svg><svg><use href="#zin"/></svg><svg><use href="#zout"/></svg><svg><use href="#zfull"/></svg><svg><use href="#zsel"/></svg><svg><use href="#zlay"/></svg><svg class="off"><use href="#znat"/></svg><svg><use href="#zlast"/></svg><svg class="off"><use href="#znext"/></svg><svg><use href="#view"/></svg><svg><use href="#view3d"/></svg><svg><use href="#bmnew"/></svg><svg><use href="#bm"/></svg><svg><use href="#clock"/></svg><svg><use href="#refresh"/></svg>
<b></b>
<svg><use href="#info"/></svg><svg><use href="#table"/></svg><svg><use href="#abacus"/></svg><svg><use href="#gear"/></svg><svg><use href="#sigma"/></svg><svg><use href="#ruler"/></svg><em></em><svg><use href="#tips"/></svg><svg class="off"><use href="#action"/></svg><em class="off"></em><svg><use href="#textann"/></svg><em></em>
</div>
<div class="toolbar">
<b class="h0"></b>
<svg><use href="#dsm"/></svg><svg><use href="#gpkgnew"/></svg><svg><use href="#shp"/></svg><svg><use href="#splnew"/></svg><svg><use href="#mem"/></svg><s></s><svg><use href="#virt"/></svg><s></s>
<b></b>
<svg class="off"><use href="#pencils"/></svg><svg><use href="#pencil"/></svg><svg class="off"><use href="#saveed"/></svg><svg class="off"><use href="#addpt"/></svg><svg class="off"><use href="#vertex"/></svg><em class="off narrow"></em><svg class="off"><use href="#attr"/></svg><svg class="off"><use href="#trash"/></svg><svg class="off"><use href="#cut"/></svg><svg class="off"><use href="#copy"/></svg><svg class="off"><use href="#paste"/></svg><svg class="off"><use href="#undo"/></svg><svg class="off"><use href="#redo"/></svg>
<b class="h15"></b>
<svg><use href="#lab"/></svg><svg><use href="#diag"/></svg><s class="wide"></s><svg><use href="#labpin"/></svg><svg><use href="#labred"/></svg><s></s><svg class="off"><use href="#lg1"/></svg><svg class="off"><use href="#lg2"/></svg><svg class="off"><use href="#lg3"/></svg><svg class="off"><use href="#lg4"/></svg><svg class="off"><use href="#lg5"/></svg>
<b></b>
<svg><use href="#wadd"/></svg><svg><use href="#wfind"/></svg><svg><use href="#csw"/></svg>
<b></b>
<svg><use href="#python"/></svg><svg><use href="#earth"/></svg>
<b class="h15"></b>
<svg><use href="#help"/></svg>
<b></b>
</div>
<div class="toolbar">
<b class="h0"></b>
<svg><use href="#selrect"/></svg><em></em><svg><use href="#selval"/></svg><em></em><svg><use href="#desel"/></svg><em></em><svg><use href="#selloc"/></svg>
<b></b><b></b>
<svg><use href="#gsearch"/></svg><svg><use href="#osm"/></svg>
</div>

<main>
<aside>
  <section class="dock nav">
    <div class="docktitle"><span>Navegador</span><svg><use href="#d-float"/></svg><svg><use href="#d-close"/></svg></div>
    <div class="docktools"><svg><use href="#t-add"/></svg><svg><use href="#refresh"/></svg><svg><use href="#t-funnel"/></svg><svg><use href="#t-collapse"/></svg><svg><use href="#t-info"/></svg></div>
    <div class="frame">
      <ul class="tree">
        <li><i class="dn"></i><svg><use href="#t-star"/></svg>Favoritos</li>
        <li class="l2"><i class="rt"></i><svg><use href="#t-folder"/></svg>Module 2 - Data</li>
        <li><i class="rt"></i><svg><use href="#t-bm"/></svg>Favoritos Espaciais</li>
        <li><i class="rt"></i><svg><use href="#t-home"/></svg>Casa do projeto</li>
        <li><i class="rt"></i><svg><use href="#t-house"/></svg>Início</li>
        <li><i class="rt"></i><svg><use href="#t-folder"/></svg>/</li>
        <li><i class="rt"></i><svg><use href="#gpkg"/></svg>GeoPackage</li>
        <li><i></i><svg><use href="#feather"/></svg>SpatiaLite</li>
        <li><i></i><svg><use href="#t-pg"/></svg>PostGIS</li>
        <li><i></i><svg><use href="#t-ms"/></svg>MSSQL</li>
        <li><i></i><svg><use href="#t-db2"/></svg>DB2</li>
        <li><i class="dn"></i><svg><use href="#t-globe"/></svg>WMS/WMTS</li>
        <li class="l2"><i class="rt"></i><svg><use href="#t-src"/></svg>Risco de inundação LiPAD 100 anos</li>
        <li><i></i><svg><use href="#t-vt"/></svg>Vector Tiles</li>
        <li><i class="dn"></i><svg><use href="#t-xyz"/></svg>XYZ Tiles</li>
        <li class="l2"><i></i><svg><use href="#t-xyz"/></svg>ESRI World Imagery</li>
        <li class="l2"><i></i><svg><use href="#t-xyz"/></svg>OpenStreetMap</li>
        <li class="l2"><i></i><svg><use href="#t-xyz"/></svg>PGP Basemap</li>
        <li><i></i><svg><use href="#t-wcs"/></svg>WCS</li>
        <li><i></i><svg><use href="#t-wfs"/></svg>WFS / OGC API - Features</li>
        <li><i class="rt"></i><svg><use href="#t-ows"/></svg>OWS</li>
        <li><i></i><svg><use href="#t-arc"/></svg>Servidor de mapa do ArcGIS</li>
        <li><i></i><svg><use href="#t-node"/></svg>GeoNode</li>
        <li><i></i><svg><use href="#t-arcf"/></svg>Servidor de feição do ArcGIS</li>
      </ul>
      <div class="scroll"><div class="sb up"></div><div class="track"><div class="thumb"></div></div><div class="sb down"></div></div>
    </div>
  </section>
  <div class="hsplit"></div>
  <section class="dock layers">
    <div class="docktitle"><span>Camadas</span><svg><use href="#d-float"/></svg><svg><use href="#d-close"/></svg></div>
    <div class="docktools"><svg><use href="#t-brush"/></svg><svg><use href="#t-group"/></svg><svg><use href="#t-eye"/></svg><svg><use href="#t-funnel"/></svg><svg><use href="#t-eps"/></svg><em></em><svg><use href="#t-expand"/></svg><svg><use href="#t-collapse"/></svg><svg><use href="#t-rem"/></svg></div>
    <div class="frame">
      <ul class="tree">
        <li class="bold"><i></i><span class="ck on"></span><span class="sw ufs"></span>module4 br_ufs</li>
        <li class="sel"><i class="dn"></i><span class="ck"></span><svg><use href="#t-pts"/></svg><u>module4 rj_clinics</u></li>
        <li class="cat"><span class="ck on"></span><span class="dot green"></span></li>
        <li class="cat"><span class="ck on"></span><span class="dot orange"></span>clinic</li>
        <li class="cat"><span class="ck on"></span><span class="dot blue"></span>parking_entrance</li>
        <li class="hid"><i class="dn"></i><span class="ck"></span><svg><use href="#t-rast"/></svg>hrsl_rj_capital_populacao</li>
        <li class="ramp"><span class="sw" style="background:#440154"></span>0.0228</li>
        <li class="ramp"><span class="sw" style="background:#3b528b"></span>9.2045</li>
        <li class="ramp"><span class="sw" style="background:#21918c"></span>18.6157</li>
        <li class="ramp"><span class="sw" style="background:#5ec962"></span>31.7704</li>
        <li class="ramp"><span class="sw" style="background:#fde725"></span>1657.5773</li>
        <li class="hid"><i></i><span class="ck"></span><span class="sw cap"></span>module4 rj_capital</li>
      </ul>
    </div>
  </section>
</aside>
<div class="vsplit"></div>
<div class="canvas">
<svg class="map" viewBox="350 179 1569 844" fill="none" stroke="#2b2920" stroke-linejoin="round">
  <!-- land interior -->
  <g fill="#e4b535" stroke="none">
    <path d="M856 549L900 440L1035 276L1064 258L1085 268L1230 400L1391 577L1389 610L1330 710L1235 802L1211 819L1080 800L1007 690L1040 640L980 560Z"/>
    <path transform="translate(900 480) scale(.33333)" d="M317 630L325 607 313 575 305 562 285 557 270 540 268 510 277 490 163 487 158 440 138 415 158 415 157 390 143 355 148 340 130 325 110 317 95 320 80 317 60 320 40 298 20 292 0 285 -30 280 -54 272 -80 262 -108 250 -125 228 -142 210 -120 150 300 150 600 480 340 660Z"/>
  </g>
  <!-- north-west coast and land border -->
  <g transform="translate(660 190) scale(.33333)" stroke-width="2.800">
    <path fill="#e4b535" d="M578 1080L568 1076 562 1055 567 1040 562 1010 558 995 565 975 565 958 555 952 548 960 540 956 525 958 505 961 483 965 470 977 459 983 447 990 436 993 425 1003 415 1014 405 1010 397 1010 390 1017 385 1026 370 1036 355 1042 350 1032 335 1031 320 1030 300 1027 288 1030 275 1030 266 1036 257 1037 245 1030 237 1030 237 962 242 955 238 945 243 935 228 947 208 962 196 970 141 970 140 957 135 952 133 945 125 938 105 935 78 934 84 926 90 920 94 912 90 905 85 900 80 888 72 880 66 872 58 868 54 856 50 848 42 840 45 832 36 826 30 820 30 808 45 806 41 797 44 785 50 775 60 768 75 760 82 750 76 740 75 730 83 716 90 705 93 692 98 672 108 665 120 660 130 650 140 645 150 638 160 633 178 633 190 628 200 627 215 623 222 614 228 611 240 609 256 610 260 620 265 616 270 621 278 621 285 580 313 430 310 418 305 405 300 402 300 388 290 379 272 364 272 321 293 316 308 308 315 314 327 314 328 300 325 292 318 287 286 286 286 246 388 245 388 232 397 240 402 235 415 229 425 226 430 218 435 214 440 225 443 235 455 242 455 280 470 280 485 294 500 305 520 303 530 296 540 291 550 294 550 308 557 309 562 297 572 293 576 282 590 278 596 271 605 268 613 267 620 263 625 266 630 258 640 252 643 235 652 231 660 227 685 219 683 205 665 203 645 199 645 185 640 175 632 160 633 150 633 130 622 123 612 113 605 103 595 92 600 90 610 97 625 100 638 98 642 104 648 110 665 106 678 114 685 107 693 112 698 122 704 123 710 129 720 122 720 108 730 103 742 98 760 100 775 96 785 96 795 90 805 78 820 74 832 74 836 67 845 62 857 50 853 42 853 31 865 31 880 28 890 36 893 48 889 60 885 72 895 76 905 78 912 85 910 92 915 102 921 110 913 122 902 134 903 148 898 156 895 165 893 185 896 205 908 212 910 225 908 240 917 244 925 253 935 262 945 270 962 274 970 279 978 272 985 270 988 260 995 257 1010 258 1015 250 1025 249 1035 246 1050 242 1060 230 1075 230 1085 237 1105 234 1125 235 1145 238 1146 230 1135 215 1137 200 1145 196 1150 203 1170 202 1185 201 1190 195 1205 193 1212 202"/>
  </g>
  <!-- northern and north-eastern coast -->
  <g transform="translate(1020 200) scale(.33333)" stroke-width="2.800">
    <path fill="#e4b535" d="M132 172L140 172 145 179 155 185 175 188 190 183 200 178 212 183 225 179 233 186 248 188 262 180 272 172 278 155 287 140 288 127 300 112 308 95 325 78 333 65 336 48 343 53 350 60 356 70 365 84 365 120 370 138 375 150 383 170 388 187 405 187 410 195 415 209 425 213 435 216 439 232 436 255 433 267 427 278 428 301 442 302 455 301 462 315 480 327 500 338 515 338 530 340 527 350 540 358 553 364 565 356 575 362 580 357 590 365 595 360 605 368 615 366 620 374 630 372 640 382 650 380 655 388 660 384 672 390 678 388 690 400 700 398 715 405 720 412 717 425 725 422 735 412 750 416 755 425 765 436 772 445 776 462 780 475 792 477 805 477 812 468 825 461 835 468 855 469 875 480 895 490 915 489 935 492 945 499 955 501 975 501 1015 497 1050 499 1075 512 1100 525 1115 540 1130 550 1145 555 1170 583 1195 605 1210 612 1218 622 1225 630 1240 629 1252 637 1270 634 1300 634 1325 640 1335 648 1345 672 1352 700 1360 728 1363 745 1370 770 1368 808 1358 845 1347 872 1340 890 1320 910 1300 935 1285 953 1273 970 1255 978 1240 990 1225 1010 1212 1033 1195 1065 1170 1100 1148 1125 1135 1124 1117 1140"/>
    <path stroke-width="3.600" d="M560 362L568 358 572 364 580 359 590 366 600 362 612 371 622 369 630 379 642 377 652 386 665 381 668 392 680 388 676 396 692 392 688 402 702 397 698 407 714 402 708 412 722 408 716 418M732 415L736 404 748 403 744 411 756 412 750 422 762 424 756 433 768 434"/>
  </g>
  <!-- western border and eastern coast of the centre -->
  <g transform="translate(900 480) scale(.33333)" stroke-width="2.800">
    <path d="M317 630L320 618 325 607 320 595 313 575 310 563 298 563 285 557 270 540 268 510 277 490 163 487 160 465 158 440 150 430 138 415 158 415 157 390 150 372 143 355 148 340 140 332 130 325 120 317 110 317 95 320 80 317 70 319 60 320 52 312 45 305 40 298 28 293 20 292 10 288 0 285 -12 284 -30 280 -42 273 -54 272 -66 264 -80 262 -90 253 -108 250 -112 240 -125 228 -130 218 -142 210"/>
    <path fill="#e4b535" d="M1477 300L1473 303 1476 320 1472 340 1470 365 1468 390 1472 425 1478 460 1470 500 1460 540 1460 575 1445 590 1428 613 1425 650 1427 680 1420 695 1405 708 1395 735 1382 758 1370 768 1362 773 1355 788 1347 800 1342 815 1347 830 1349 842 1325 852 1305 862 1292 870 1285 880 1290 890 1285 895 1282 902 1230 902 1215 902 1217 890 1208 887 1205 903 1185 908 1165 903 1160 912 1140 915 1150 905 1125 901 1115 912 1118 922 1100 925 1095 935 1075 943 1080 955 1070 953 1055 952 1030 960 1010 970 1000 972 980 985 955 1003 933 1020"/>
  </g>
  <!-- south -->
  <g transform="translate(980 690) scale(.33333)" stroke-width="2.800">
    <path fill="#e4b535" d="M693 390L680 402 672 414 655 432 640 448 637 458 640 475 635 490 633 500 640 530 637 545 637 590 632 603 628 615 612 626 600 635 585 647 570 663 555 685 545 708 540 720 530 740 515 762 500 780 485 795 465 812 445 823 430 832 408 853 402 868 398 880 385 903 365 920 350 934 341 938 333 935 334 902 345 892 360 877 345 868 330 858 325 845 318 835 308 825 295 822 285 812 275 803 270 798 255 797 245 793 237 787 230 785 220 772 205 759 195 768 185 773 180 770 180 758 165 743 155 735 145 725 130 713 115 712 108 717 105 723 88 723 82 718 97 710 102 695 118 687 130 672 145 652 155 650 165 635 180 622 190 607 200 605 195 600 215 590 230 577 240 575 250 562 265 554 275 550 290 547 300 540 315 531 322 518 320 500 323 480 318 462 310 455 312 440 300 431 285 436 272 435 267 428 275 415 278 390 284 370 287 343 275 330 262 326 250 327 240 332 228 332 217 334 212 320 208 305 210 290 203 285 204 262 200 245 190 232 165 228 158 223 152 218 145 229 130 228 105 227 90 226 80 222 70 219 57 216 62 200 60 180 67 150 62 137 57 125 46 103 52 95 65 90 50 73 58 60 65 45 73 20 77 0"/>
    <path fill="#e4b535" d="M640 572L641 555 649 546 650 556 644 571ZM640 542L646 545"/>
  </g>
  <!-- state borders -->
  <g transform="translate(660 190) scale(.33333)" stroke-width="2.800">
    <path d="M41 797L110 824 250 856 320 890 470 959 483 965M470 959L484 950 498 935 510 936 522 936 535 944 548 937 557 941 572 928 580 937 588 926 592 911 610 909 630 906 637 905 640 893 648 880 655 870 671 846 718 847 728 860 738 870 745 870 756 885 762 886 770 900 780 898 790 893 800 898 992 898 991 890 993 880 997 870 995 860 999 830 1006 807M800 898L796 930 800 940 798 950 801 962 795 975 801 995 799 1031 865 1031 878 1038 895 1042 898 1055 888 1070 887 1080M1118 495L1080 581 1003 748 988 770 1000 790 1006 807 1012 815 1020 830 1030 852 1038 860 1040 890 1055 900 1063 905 1070 908 1075 915 1085 925 1098 933 1496 960M962 274L962 340 963 365 972 378 976 393 990 410 1003 425 1015 422 1020 437 1032 442 1045 450 1055 457 1068 460 1085 472 1092 477 1098 488 1105 489 1118 487 1125 480 1134 480 1130 490 1118 495M685 219L700 222 707 230 722 228 727 238 722 252 728 260 733 270 741 295 738 310 741 325 745 345 752 360 757 375 752 395 740 400 755 413 765 422 775 437 788 438 802 449 794 440 795 420 797 400 810 387 825 383 838 388 845 396 852 407 865 405 873 397 870 385 880 355 892 337 962 338"/>
  </g>
  <g transform="translate(1020 200) scale(.33333)" stroke-width="2.800">
    <path d="M132 172L136 190 138 212 160 215 175 225 195 236 212 240 218 250 218 262 230 270 237 280 237 300 247 325 262 342 268 355 275 365 282 385 292 393 300 398 322 394 330 370 340 358 350 340 365 325 390 312 405 288 415 280 427 280M672 390L670 410 668 425 660 432 660 450 655 465 650 485 640 490 635 512 625 530 615 545 610 562 598 578 590 592 580 605 567 608 550 622 520 642 510 654 525 655 540 660 545 668 538 676 540 688 532 695 533 710 524 717 513 735 500 743 482 750 478 775 470 790 482 810 480 828 475 845 465 860 455 870 443 880 430 897 425 912 415 932 408 952 400 970 394 985 392 1000 392 1020 385 1035 389 1070 389 1100 396 1113 398 1118 396 1140M520 645L535 645 550 648 560 653 575 657 585 665 588 690 592 710 589 740 585 765 572 770 590 788 600 800 613 820 628 815 640 812 650 820 645 835 635 838 625 850 622 870 613 880 625 890 630 905 642 915 640 928 655 948 670 952 682 955 697 957M935 492L938 505 928 520 915 533 903 536 890 540 880 560 872 570 865 583 870 595 867 610 870 620 875 645 870 660 858 675 860 705 873 712 872 725 868 737 855 743 840 743 830 740 820 738 800 740 785 757 775 761 770 770 755 778 740 785 712 795 706 815 700 830 692 850 680 875 685 895 690 910 685 955M962 503L970 515 963 530 972 545 972 560 979 580 975 600 973 625 990 645 992 690 997 710 1000 730 1022 742 1023 752 1018 778M1018 778L1040 780 1060 775 1075 775 1095 795 1110 806 1132 797M1018 778L1007 785 1015 810 1005 835 985 850 970 860 955 872 945 885 935 895 905 900 890 908 878 916 862 907 848 904 835 896 815 908 812 920 822 930 820 945 808 970 795 980 782 975 770 982 745 997 722 990 713 975 713 960 700 948 690 962 668 982 655 1000 642 1022 652 1035 670 1042 657 1044 664 1058 656 1062 655 1080 663 1095 661 1140M970 860L980 867 990 870 1000 885 1003 905 1013 908 1020 900 1030 885 1050 882 1070 860 1088 851 1100 860 1110 862 1125 865 1132 876 1137 868 1142 879 1150 876 1152 886 1160 900 1172 889 1185 873 1195 881 1205 880 1220 890 1237 900 1250 896 1265 895 1280 890 1295 875 1325 872 1347 872M1160 900L1170 910 1200 922 1235 940 1255 958 1270 968M1172 912L1172 925 1183 945 1187 960 1182 985 1158 990 1165 1010 1175 1020 1190 1035 1212 1035M1218 622L1195 627 1185 650 1170 672 1160 697 1150 700 1140 712 1137 725 1133 735 1127 752 1138 775 1132 797 1145 798 1155 806 1170 803 1195 790 1205 778 1215 773 1232 782 1230 800 1222 805 1215 815 1225 825 1237 835 1250 825 1265 810 1290 803 1322 798 1330 785 1350 780 1368 788M1140 717L1155 723 1165 725 1185 712 1205 705 1220 698 1222 708 1210 722 1205 738 1225 742 1245 738 1255 753 1263 745 1265 722 1275 713 1282 722 1320 725 1335 723 1357 728"/>
  </g>
  <g transform="translate(900 480) scale(.33333)" stroke-width="2.800">
    <path stroke-width="3.400" d="M1072 956L1082 962 1078 952M1095 950L1099 948M1208 892L1214 888 1218 894 1212 899M1155 906L1175 902 1186 907M1140 915L1148 910M1112 918L1122 903 1130 900M1375 535L1380 545M1332 645L1350 655M1358 595L1362 600M1016 200L1030 202M1016 215L1024 218M1015 283L1034 287"/>
    <path d="M167 200L167 212 172 222 178 235 185 245 180 262 168 268 167 285 160 290 153 300 150 315 130 326M752 265L758 280 755 305 745 325 740 335 738 352 735 370 728 390 722 408 710 408 700 412 690 430 680 455 665 463 655 465 645 477 628 490 625 505 615 518 603 530 595 555 590 575 595 590 600 600 605 612 620 615 610 630 625 637 645 642 680 660 700 667 722 677 735 688M758 280L765 265 780 252 772 275 800 288 830 302 832 290 837 280 845 285 853 275 860 283 870 280 878 290 880 302 890 295 905 302 912 298 920 305 930 308 935 314 937 295 950 303 970 297 985 290 1000 283 1015 283 1033 282M1020 255L1025 257 1020 285 1022 300 1033 305 1023 312 1025 350 1043 372 1040 390 1035 412 1030 405 1015 402 1010 393 1003 400 1005 412 985 412 982 430 990 445 988 463 970 470 955 473 957 485 950 500 965 530 955 545 945 565 957 575 958 600 940 612 920 625 905 619 895 617 880 620 858 615 840 628 830 626 826 633 815 630 800 635 775 640 765 655 760 660 750 670 740 675 735 690 728 705 728 720 745 712 760 706 775 712 800 712 833 716 838 735 845 738 847 728 853 732 857 745 862 728 895 725 910 727 930 720 938 724 945 716 960 728 962 740 968 750 962 760 968 775 978 803 990 806 1003 808 1000 830 1000 865 1012 880 1014 893 1030 898 1050 895 1055 882 1080 882 1095 876 1115 867 1140 860 1180 845 1218 847 1235 840 1265 825 1270 800 1280 778 1295 765 1308 788 1330 793 1350 797M903 440L950 440 955 450 957 475 898 475ZM1035 412L1033 425 1045 417 1070 408 1090 395 1110 378 1145 363 1173 368 1170 387 1190 397 1205 390 1225 390 1245 403 1265 413 1280 418 1300 418 1315 432 1330 455 1350 457 1370 453 1390 460 1405 463 1415 480 1405 493 1390 510 1388 525 1375 535 1373 558 1385 572 1395 580 1393 592 1428 613M1393 592L1375 591 1360 597 1345 608 1340 615 1345 630 1335 645 1348 650 1346 665 1350 680 1335 700 1325 730 1305 732 1297 740 1298 752 1295 765M1115 867L1125 880 1150 882 1148 895 1125 903M312 568L320 580 328 587 350 580 375 555 395 550 415 545 440 557 475 573 495 570 505 563 515 567 525 573 545 565 562 548 560 575 548 585 555 593 575 597 597 597M728 720L722 733 705 745 690 765 685 780 675 790 672 802 660 820 650 840 640 850 620 865 600 880 570 900 560 925 545 935 540 955 535 965 525 972M600 880L630 882 655 882 665 877 690 883 715 887 745 900 770 902 795 900 812 915 813 935 818 950 825 970 838 990 835 1007 860 1009 880 1010 880 1030 895 1027 902 1038 912 1044"/>
  </g>
  <g transform="translate(980 690) scale(.33333)" stroke-width="2.800">
    <path d="M325 475L340 476 355 482 375 481 400 485 420 488 440 495 467 502 473 492 475 480 490 478 505 475 515 462 540 463 555 460 577 473 600 462 637 457M315 531L335 533 342 529 350 533 360 529 365 535 380 537 400 540 415 541 425 543 430 550 440 550 460 555 475 565 490 575 505 595 515 607 535 610 560 612 568 617 555 635 552 655 540 660 550 665 555 658 570 663M546 655L548 667"/>
  </g>
  <path d="M1524.500 387H1526M1589 730H1590M1599 731H1599.700" stroke-width="1.300"/>
</svg>
</div>
</main>

<footer>
  <div class="search"><svg><use href="#s-lens"/></svg><span>Escreva para localizar (Ctrl+K)</span></div>
  <label class="coord">Coordenada</label><div class="box b-coord">-66.00,-32.45</div><svg class="s-mouse"><use href="#s-mouse"/></svg>
  <label class="esc">Escala</label><div class="box b-esc"><span>1:17091016</span><i class="combo"></i></div><svg class="s-lock"><use href="#s-lock"/></svg>
  <label class="lupa">Lupa</label><div class="box b-lupa"><span>100%</span><i class="spin"></i></div>
  <label class="rot">Rotação</label><div class="box b-rot"><span>0.0 °</span><i class="spin"></i></div>
  <span class="ck on"></span><label class="ren">Renderizar</label>
  <svg class="s-globe"><use href="#s-globe"/></svg><label class="epsg">EPSG:4326</label><svg class="s-msg"><use href="#s-msg"/></svg>
</footer>
</body>
</html>
```
FILE: styles.css
```css
* { box-sizing: border-box; }
body {
  margin: 0; width: 1920px; height: 1055px; overflow: hidden;
  display: flex; flex-direction: column;
  background: #efefef; color: #000;
  font: 14px/19px "Noto Sans", "Open Sans", sans-serif;
}
.defs { position: absolute; }
svg { flex: none; }
ul { list-style: none; margin: 0; padding: 0; }

/* title bar */
.desktop-strip { height: 2px; background: #1d1d1d; display: flex; padding-left: 1333px; gap: 32px; flex: none; }
.desktop-strip i { width: 66px; height: 2px; }
.w1 { background: #0a77bd; }
.w2 { background: #06ae5b; }
.w3 { background: #8a05c0; }
.w4 { background: repeating-linear-gradient(90deg, #6d3a1c 0 5px, #a8501c 5px 8px, #3a2d26 8px 11px); }
.titlebar { height: 37px; flex: none; background: #2c2c2c; border-top: 1px solid #3a3a3a; border-bottom: 1px solid #1f1b1b; display: grid; grid-template-columns: 1fr auto 1fr; align-items: center; }
.titlebar h1 { grid-column: 2; margin: 0; font-size: 14px; letter-spacing: .4px; font-weight: 700; color: #f4f4f4; }
.winbtns { justify-self: end; display: flex; align-items: center; padding-right: 8px; }
.min { width: 8px; height: 1px; background: #fff; margin: 5px 25px 0 0; }
.rest { width: 10px; height: 10px; margin-right: 19px; }
.cls { width: 20px; height: 20px; }

/* menu */
.menubar { height: 22px; flex: none; border-bottom: 1px solid #c8c8c8; display: grid; padding-left: 10px; grid-template-columns: 65px 55px 51px 69px 112px 118px 52px 58px 111px 46px 56px 81px 50px; letter-spacing: .1px; line-height: 22px; white-space: nowrap; }
.menubar u { text-underline-offset: 2px; text-decoration-thickness: 1px; }

/* toolbars */
.toolbar { height: 39px; flex: none; display: flex; align-items: center; background: linear-gradient(#f8f8f8, #ebebeb); border-bottom: 1px solid #b4b4b4; }
.toolbar svg { width: 24px; height: 24px; margin: 0 4.5px; }
.toolbar .pressed { width: 33px; height: 31px; margin-right: -1px; background: #dcdcdc; border: 1px solid #b2b2b2; border-radius: 3px; display: flex; align-items: center; justify-content: center; }
.toolbar .pressed svg { margin: 0; }
.toolbar .off { opacity: .38; }
.toolbar b { width: 16.500px; height: 20px; flex: none; background: radial-gradient(circle, #c4c4c4 .8px, transparent 1px) 9px 0 / 3px 4px repeat-y, radial-gradient(circle, #c4c4c4 .8px, transparent 1px) 12px 0 / 3px 4px repeat-y; }
.toolbar b.h0 { width: 12.500px; background-position: 4px 0, 7px 0; }
.toolbar b.h15 { width: 15px; }
.toolbar s { width: 7px; height: 22px; flex: none; background: linear-gradient(#cfcfcf, #cfcfcf) 3px 0 / 1px 100% no-repeat; }
.toolbar s.wide { width: 9px; background-position: 5px 0; }
em { width: 12px; height: 6px; flex: none; background: #5a5a5a; clip-path: polygon(1.500px 0, 10.500px 0, 6px 5px); }
em.narrow { width: 10px; }

/* docks */
main { flex: 1; display: flex; min-height: 0; }
aside { width: 343px; display: flex; flex-direction: column; }
.docktitle { height: 20px; display: flex; align-items: center; padding: 0 1px 0 4px; gap: 2px; letter-spacing: .1px; }
.docktitle span { flex: 1; }
.docktitle svg { width: 12px; height: 12px; }
.docktools { height: 28px; display: flex; align-items: center; padding-left: 8px; gap: 9px; margin-bottom: 2px; }
.docktools svg { width: 16px; height: 16px; }
.docktools em { margin: 0 -1px 0 -5px; }
.dock { display: flex; flex-direction: column; }
.frame { flex: 1; min-height: 0; background: #fff; border: 1px solid #b4b4b4; display: flex; overflow: hidden; }
.nav { height: 506px; }
.layers { flex: 1; min-height: 0; }
.hsplit { height: 6px; background: radial-gradient(circle, #aaa .7px, transparent 1px) 164px 1px / 3px 3px no-repeat, radial-gradient(circle, #aaa .7px, transparent 1px) 170px 1px / 3px 3px no-repeat, radial-gradient(circle, #aaa .7px, transparent 1px) 176px 1px / 3px 3px no-repeat; }
.tree { flex: 1; letter-spacing: .17px; }
.tree li { height: 19px; display: flex; align-items: center; white-space: nowrap; padding-left: 5px; }
.tree li.l2 { padding-left: 25px; }
.tree svg { width: 16px; height: 16px; margin-right: 6px; }
.tree i { width: 10px; height: 10px; margin-right: 8px; flex: none; }
.tree i.dn { background: #555; clip-path: polygon(1px 3px, 9px 3px, 5px 7.500px); }
.tree i.rt { background: #555; clip-path: polygon(3px 1px, 7.500px 5px, 3px 9px); }
.scroll { width: 14px; border-left: 1px solid #b4b4b4; display: flex; flex-direction: column; background: #f9f9f9; }
.sb { height: 14px; display: flex; align-items: center; justify-content: center; background: #fbfbfb; }
.sb.up { border-bottom: 1px solid #b4b4b4; }
.sb::before { content: ""; width: 8px; height: 5px; background: #555; clip-path: polygon(0 0, 100% 0, 50% 100%); }
.sb.up::before { clip-path: polygon(0 100%, 100% 100%, 50% 0); }
.track { flex: 1; display: flex; flex-direction: column; justify-content: flex-end; background: linear-gradient(90deg, #e9e9e9, #fdfdfd); }
.thumb { height: 20px; background: #e4e4e4; border: solid #b4b4b4; border-width: 1px 0; }

.ck { width: 14px; height: 14px; background: #fff; border: 1px solid #bdbdbd; flex: none; }
.ck.on::before { content: ""; display: block; width: 8px; height: 9px; margin: 2px; background: #000; clip-path: polygon(0 50%, 18% 42%, 36% 66%, 84% 0, 100% 8%, 42% 100%, 30% 100%); }
.tree .ck { margin-right: 6px; }
.sw { width: 16px; height: 16px; margin-right: 6px; flex: none; }
.ufs { background: #e4b535; border: 1px solid #806824; }
.cap { background: #dcdcdc; border: 1px solid #808080; }
.layers .bold { font-weight: 700; letter-spacing: .26px; }
.layers .sel { background: #308cc6; color: #e8f2fa; font-weight: 700; font-style: italic; letter-spacing: .45px; }
.layers .sel i.dn { background: #15405a; }
.layers .sel u { text-underline-offset: 3px; }
.layers .hid { color: #808080; font-weight: 700; font-style: italic; letter-spacing: .5px; }
.layers .cat { height: 22px; padding-left: 43px; }
.layers .ramp { padding-left: 43px; letter-spacing: .3px; }
.dot { width: 8px; height: 8px; border-radius: 50%; border: 1px solid #333; margin: 0 12px 0 6px; }
.green { background: #7bc96a; }
.orange { background: #ed6b30; }
.blue { background: #0b84f3; }

.vsplit { width: 6px; background: radial-gradient(circle, #aaa .7px, transparent 1px) 2px 415px / 3px 18px no-repeat; }
.canvas { flex: 1; background: #fff; border: 1px solid #b4b4b4; }
.map { width: 1569px; height: 844px; display: block; }

/* status bar */
footer { height: 31px; flex: none; display: flex; align-items: center; font-size: 12px; letter-spacing: -.2px; white-space: nowrap; padding-left: 4px; }
.search { width: 360px; height: 25px; background: #fff; border: 1px solid #b4b4b4; border-radius: 3px; display: flex; align-items: center; gap: 8px; padding-left: 8px; color: #808080; font-size: 14px; letter-spacing: .16px; }
.search svg { width: 13px; height: 13px; }
footer label { flex: none; }
.coord { width: 70px; margin-left: 689px; }
.box { height: 24px; background: #fff; border: 1px solid #b4b4b4; border-radius: 3px; display: flex; align-items: center; padding-left: 4px; flex: none; }
.box span { flex: 1; }
.b-coord { width: 88px; padding-left: 7px; }
.s-mouse { width: 16px; height: 16px; margin: 0 13px 0 5px; }
.esc { width: 37px; }
.b-esc { width: 96px; }
.combo, .spin { width: 19px; align-self: stretch; border-left: 1px solid #c4c4c4; display: flex; flex-direction: column; align-items: center; justify-content: space-around; }
.spin { width: 13px; padding: 1px 0; }
.combo::before, .spin::after { content: ""; width: 8px; height: 5px; background: #666; clip-path: polygon(0 0, 100% 0, 50% 100%); }
.spin::before { content: ""; width: 8px; height: 5px; background: #666; clip-path: polygon(0 100%, 100% 100%, 50% 0); }
.s-lock { width: 14px; height: 16px; margin: 0 9px 0 12px; }
.lupa { width: 29px; }
.b-lupa { width: 97px; }
.rot { width: 54px; margin-left: 10px; }
.b-rot { width: 93px; }
footer .ck { margin: 0 5px 0 7px; }
.ren { width: 76px; }
.s-globe { width: 14px; height: 14px; margin-right: 3px; }
.epsg { width: 82px; }
.s-msg { width: 16px; height: 16px; }
```
